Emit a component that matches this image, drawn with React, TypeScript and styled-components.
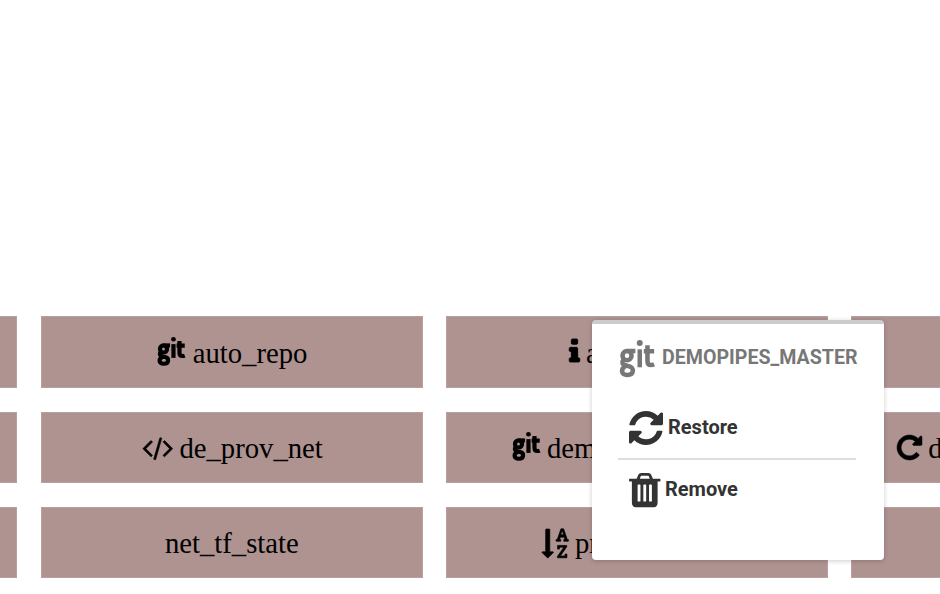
import React from 'react';
import styled, { createGlobalStyle } from 'styled-components';

const GlobalStyle = createGlobalStyle`
  html, body { margin: 0; background: #fff; overflow: hidden; }
  * { box-sizing: border-box; }
`;

const Page = styled.main`
  position: relative;
  width: 940px;
  height: 594px;
  padding-top: 316.3px;
  overflow: hidden;
`;

const Board = styled.div`
  display: grid;
  grid-template-columns: repeat(4, 381.6px);
  grid-auto-rows: 71.5px;
  gap: 23.8px 23.5px;
  margin-left: -364.2px;
`;

const Tile = styled.div<{ $inset?: number }>`
  display: flex;
  align-items: flex-start;
  padding-left: ${(p) => p.$inset ?? 0}px;
  background: #ae9391;
  border: 1px solid #b9a09e;
  overflow: hidden;
`;

const TileName = styled.span<{ $gap?: number }>`
  margin: 18.3px 0 0 ${(p) => p.$gap ?? 0}px;
  font: 28.7px/34px 'Liberation Serif', serif;
  white-space: nowrap;
  color: #000;
`;

const Glyph = styled.svg<{ $w: number; $h: number; $top?: number; $weight?: number }>`
  display: block;
  flex: none;
  width: ${(p) => p.$w}px;
  height: ${(p) => p.$h}px;
  margin-top: ${(p) => p.$top ?? 0}px;
  fill: currentColor;
  stroke: currentColor;
  stroke-width: ${(p) => p.$weight ?? 0};
  overflow: visible;
`;

const GitSvg = styled(Glyph)`
  fill: none;
  stroke-width: ${(p) => p.$weight ?? 13.5};
`;

const Menu = styled.section`
  position: absolute;
  left: 592px;
  top: 320px;
  width: 292px;
  height: 240px;
  padding: 0 28px 0 26px;
  background: #fff;
  border-top: 4px solid #ccc;
  border-radius: 4px;
  box-shadow: 0 1px 5px rgba(0, 0, 0, 0.2);
  font-family: Roboto, sans-serif;
`;

const MenuHeader = styled.header`
  display: flex;
  height: 73px;
  padding-left: 2px;
  color: #777;
`;

const MenuTitle = styled.h2`
  margin: 22px 0 0 7.5px;
  font-size: 19.6px;
  line-height: 24px;
  font-weight: 700;
  white-space: nowrap;
`;

const MenuItem = styled.div<{ $height: number; $divided?: boolean }>`
  display: flex;
  height: ${(p) => p.$height}px;
  padding-left: 11px;
  color: #333;
  border-bottom: ${(p) => (p.$divided ? '2px solid #ddd' : '0')};
`;

const MenuLabel = styled.span<{ $top: number; $gap: number }>`
  margin: ${(p) => p.$top}px 0 0 ${(p) => p.$gap}px;
  font-size: 20px;
  line-height: 24px;
  font-weight: 700;
`;

const CODE =
  'M553 1399l-50 50q-10 10-23 10t-23-10l-466-466q-10-10-10-23t10-23l466-466q10-10 23-10t23 10l50 50q10 10 10 23t-10 23l-393 393 393 393q10 10 10 23t-10 23zm591-1067l-373 1291q-4 13-15.5 19.5t-23.5 2.5l-62-17q-13-4-19.5-15.5t-2.5-24.5l373-1291q4-13 15.5-19.5t23.5-2.5l62 17q13 4 19.5 15.5t2.5 24.5zm657 651l-466 466q-10 10-23 10t-23-10l-50-50q-10-10-10-23t10-23l393-393-393-393q-10-10-10-23t10-23l50-50q10-10 23-10t23 10l466 466q10 10 10 23t-10 23z';
const INFO =
  'M1216 1344v128q0 26-19 45t-45 19h-512q-26 0-45-19t-19-45v-128q0-26 19-45t45-19h64v-384h-64q-26 0-45-19t-19-45v-128q0-26 19-45t45-19h384q26 0 45 19t19 45v576h64q26 0 45 19t19 45zm-128-1152v192q0 26-19 45t-45 19h-256q-26 0-45-19t-19-45v-192q0-26 19-45t45-19h256q26 0 45 19t19 45z';
const SORT =
  'M1191 350h177l-72-218-12-47q-2-16-2-20h-4l-3 20q0 1-3.5 18t-7.5 29zm-455 1090q0 12-10 24l-319 319q-10 9-23 9-12 0-23-9l-320-320q-15-16-7-35 8-20 30-20h192v-1376q0-14 9-23t23-9h192q14 0 23 9t9 23v1376h192q14 0 23 9t9 23zm836 109v233h-584v-90l369-529q12-18 21-27l11-9v-3q-2 0-6.5.5t-7.5.5q-12 3-30 3h-232v115h-120v-229h567v89l-369 530q-6 8-21 26l-11 11v2l14-2q9-2 30-2h248v-119h121zm89-898v106h-284v-106h75l-47-144h-243l-47 144h75v106h-287v-106h70l230-662h162l230 662h70z';
const REPEAT =
  'M1664 256v448q0 26-19 45t-45 19h-448q-42 0-59-40-17-39 14-69l138-138q-148-137-349-137-104 0-198.5 40.5t-163.5 109.5-109.5 163.5-40.5 198.5 40.5 198.5 109.5 163.5 163.5 109.5 198.5 40.5q119 0 225-52t179-147q7-10 23-12 15 0 25 9l137 138q9 8 9.5 20.5t-7.5 22.5q-109 132-264 204.5t-327 72.5q-156 0-298-61t-245-164-164-245-61-298 61-298 164-245 245-164 298-61q147 0 284.5 55.5t244.5 156.5l130-129q29-31 70-14 39 17 39 59z';
const REFRESH =
  'M1511 928q0 5-1 7-64 268-268 434.5t-478 166.5q-146 0-282.5-55t-243.5-157l-129 129q-19 19-45 19t-45-19-19-45v-448q0-26 19-45t45-19h448q26 0 45 19t19 45-19 45l-137 137q71 66 161 102t187 36q134 0 250-65t186-179q11-17 53-117 8-23 30-23h192q13 0 22.5 9.5t9.5 22.5zm25-800v448q0 26-19 45t-45 19h-448q-26 0-45-19t-19-45 19-45l138-138q-148-137-349-137-134 0-250 65t-186 179q-11 17-53 117-8 23-30 23h-199q-13 0-22.5-9.5t-9.5-22.5v-7q65-268 270-434.5t480-166.5q146 0 284 55.5t245 156.5l130-129q19-19 45-19t45 19 19 45z';
const TRASH =
  'M704 1376v-704q0-14-9-23t-23-9h-64q-14 0-23 9t-9 23v704q0 14 9 23t23 9h64q14 0 23-9t9-23zm256 0v-704q0-14-9-23t-23-9h-64q-14 0-23 9t-9 23v704q0 14 9 23t23 9h64q14 0 23-9t9-23zm256 0v-704q0-14-9-23t-23-9h-64q-14 0-23 9t-9 23v704q0 14 9 23t23 9h64q14 0 23-9t9-23zm-544-992h448l-48-117q-7-9-17-11h-317q-10 2-17 11zm928 32v64q0 14-9 23t-23 9h-96v948q0 83-47 143.5t-113 60.5h-832q-66 0-113-58.5t-47-141.5v-952h-96q-14 0-23-9t-9-23v-64q0-14 9-23t23-9h309l70-167q15-37 54-63t79-26h320q40 0 79 26t54 63l70 167h309q14 0 23 9t9 23z';

// Git logo: looped bowl, dotted stem and hooked crossbar
function GitMark({ w, h, top, weight }: { w: number; h: number; top: number; weight?: number }) {
  return (
    <GitSvg viewBox="0 0 103 112" preserveAspectRatio="none" $w={w} $h={h} $top={top} $weight={weight}>
      <ellipse cx="21" cy="47" rx="13.5" ry="14" />
      <path d="M22 33H46" />
      <path d="M11 58C5 66 6 74 16 76L27 79C43 82 43 105 22 105C2 105 2 86 16 79" />
      <path d="M59 28V82" />
      <circle cx="59" cy="9" r="9" fill="currentColor" stroke="none" />
      <path d="M82 16V62Q82 75 92 75Q97 75 102 73M71 34H102" />
    </GitSvg>
  );
}

export default function App() {
  return (
    <>
      <GlobalStyle />
      <Page>
        <Board>
          <Tile />
          <Tile $inset={116.3}>
            <GitMark w={27} h={28.5} top={19.7} weight={16} />
            <TileName $gap={7.5}>auto_repo</TileName>
          </Tile>
          <Tile $inset={121.5}>
            <Glyph viewBox="576 128 640 1408" $w={11} $h={23} $top={22} $weight={55}><path d={INFO} /></Glyph>
            <TileName $gap={6.5}>a</TileName>
          </Tile>
          <Tile />

          <Tile />
          <Tile $inset={101}>
            <Glyph viewBox="-19 300 1830 1360" $w={29.5} $h={22} $top={25} $weight={35}><path d={CODE} /></Glyph>
            <TileName $gap={7}>de_prov_net</TileName>
          </Tile>
          <Tile $inset={65.5}>
            <GitMark w={27} h={28.5} top={19.7} weight={16} />
            <TileName $gap={7.5}>demo</TileName>
          </Tile>
          <Tile $inset={44.6}>
            <Glyph viewBox="128 128 1536 1536" $w={25} $h={25} $top={22.8} $weight={30}><path d={REPEAT} /></Glyph>
            <TileName $gap={6.5}>d</TileName>
          </Tile>

          <Tile />
          <Tile $inset={123}>
            <TileName>net_tf_state</TileName>
          </Tile>
          <Tile $inset={94.5}>
            <Glyph viewBox="30 0 1640 1792" $w={26.5} $h={29} $top={20.7} $weight={40}><path d={SORT} /></Glyph>
            <TileName $gap={7}>pr</TileName>
          </Tile>
          <Tile />
        </Board>

        <Menu>
          <MenuHeader>
            <GitMark w={34.5} h={37.3} top={16} />
            <MenuTitle>DEMOPIPES_MASTER</MenuTitle>
          </MenuHeader>
          <MenuItem $height={63} $divided>
            <Glyph viewBox="0 0 1536 1536" $w={34} $h={34} $top={13.5}><path d={REFRESH} /></Glyph>
            <MenuLabel $top={18} $gap={5}>Restore</MenuLabel>
          </MenuItem>
          <MenuItem $height={60}>
            <Glyph viewBox="192 128 1408 1536" $w={31.5} $h={34.3} $top={12.5}><path d={TRASH} /></Glyph>
            <MenuLabel $top={17} $gap={4.5}>Remove</MenuLabel>
          </MenuItem>
        </Menu>
      </Page>
    </>
  );
}
